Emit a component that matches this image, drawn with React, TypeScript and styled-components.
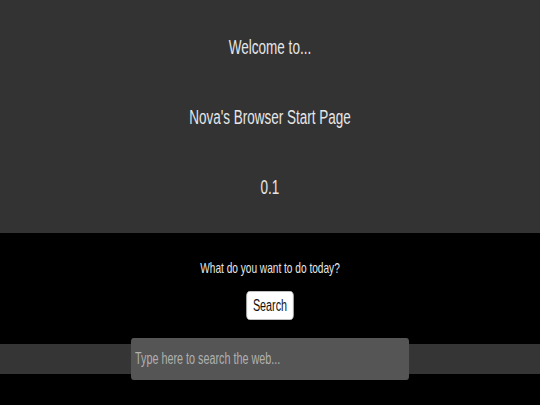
import React from 'react';
import styled, { createGlobalStyle } from 'styled-components';

// the reference was shot at 800px wide and squeezed into 540, so the page is laid out at 800 and scaled
const SQUEEZE = 540 / 800;

const GlobalStyle = createGlobalStyle`
  html, body {
    margin: 0;
    padding: 0;
    background: #000;
    overflow: hidden;
  }
  body {
    font-family: "Liberation Sans", Arial, sans-serif;
  }
`

const Page = styled.div`
  width: 800px;
  height: 405px;
  background: #000;
  transform: scaleX(${SQUEEZE});
  transform-origin: left top;
`

const Hero = styled.header`
  height: 233px;
  box-sizing: border-box;
  background: #333333;
  display: flex;
  flex-direction: column;
  align-items: center;
  padding-top: 36px;
  gap: 47px;
`

const HeroLine = styled.div`
  font-size: 20px;
  line-height: 23px;
  color: #e6e6e6;
`

const Main = styled.main`
  display: flex;
  flex-direction: column;
  align-items: center;
  padding-top: 26px;
`

const Question = styled.p`
  margin: 0;
  font-size: 15px;
  line-height: 17px;
  color: #e6e6e6;
`

const SearchButton = styled.button`
  margin-top: 15px;
  height: 29px;
  padding: 0 9px;
  background: #fff;
  color: #111;
  border: 1px solid #ccc;
  border-radius: 5px;
  font-family: "Liberation Sans", Arial, sans-serif;
  font-size: 16px;
  cursor: pointer;
`

const SearchBar = styled.div`
  margin-top: 24px;
  width: 100%;
  height: 30px;
  background: #353535;
  display: flex;
  justify-content: center;
  align-items: center;
`

const SearchInput = styled.input`
  flex: none;
  width: 412px;
  height: 42px;
  box-sizing: border-box;
  padding: 0 6px;
  background: #555555;
  border: none;
  border-radius: 4px;
  color: #eee;
  font-family: "Liberation Sans", Arial, sans-serif;
  font-size: 16px;
  outline: none;

  &::placeholder {
    color: #b0b0b0;
  }
`

const App: React.FC = () => {
  return (
    <>
      <GlobalStyle />
      <Page>
        <Hero>
          <HeroLine>Welcome to...</HeroLine>
          <HeroLine>Nova's Browser Start Page</HeroLine>
          <HeroLine>0.1</HeroLine>
        </Hero>
        <Main>
          <Question>What do you want to do today?</Question>
          <SearchButton>Search</SearchButton>
          <SearchBar>
            <SearchInput placeholder="Type here to search the web..." />
          </SearchBar>
        </Main>
      </Page>
    </>
  );
}

export default App;
